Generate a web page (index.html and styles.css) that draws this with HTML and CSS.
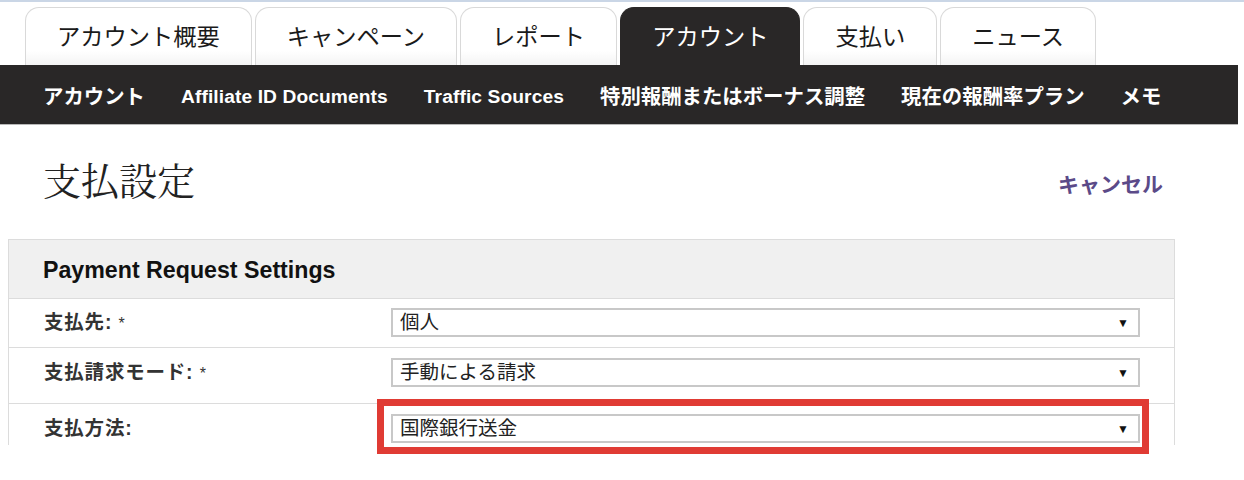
FILE: index.html
```html
<!DOCTYPE html>
<html lang="ja">
<head>
    <meta charset="UTF-8">
    <meta name="viewport" content="width=device-width, initial-scale=1.0">
    <title>支払設定</title>
    <link rel="stylesheet" href="styles.css">
</head>
<body>

<div class="topline"></div>

<nav class="tabs">
    <a class="tab" href="#">アカウント概要</a>
    <a class="tab" href="#">キャンペーン</a>
    <a class="tab" href="#">レポート</a>
    <a class="tab active" href="#">アカウント</a>
    <a class="tab" href="#">支払い</a>
    <a class="tab" href="#">ニュース</a>
</nav>

<nav class="subnav">
    <a class="ja" href="#">アカウント</a>
    <a href="#">Affiliate ID Documents</a>
    <a href="#">Traffic Sources</a>
    <a class="ja" href="#">特別報酬またはボーナス調整</a>
    <a class="ja" href="#">現在の報酬率プラン</a>
    <a class="ja" href="#">メモ</a>
</nav>

<div class="title-row">
    <h1>支払設定</h1>
    <a class="cancel" href="#">キャンセル</a>
</div>

<div class="panel">
    <div class="panel-header">Payment Request Settings</div>

    <div class="row row-1">
        <label class="field-label">支払先: <span class="req">*</span></label>
        <div class="select">
            <span>個人</span>
            <span class="arrow">▼</span>
        </div>
    </div>

    <div class="row row-2">
        <label class="field-label">支払請求モード: <span class="req">*</span></label>
        <div class="select">
            <span>手動による請求</span>
            <span class="arrow">▼</span>
        </div>
    </div>

    <div class="row row-3">
        <label class="field-label">支払方法:</label>
        <div class="select">
            <span>国際銀行送金</span>
            <span class="arrow">▼</span>
        </div>
        <div class="highlight"></div>
    </div>
</div>

</body>
</html>
```

FILE: styles.css
```css
html, body {
    min-height: 480px;
}
body {
    margin: 0;
    background-color: #ffffff;
    color: #222;
    font-family: 'Liberation Sans', 'Noto Sans CJK JP', sans-serif;
}
a {
    text-decoration: none;
}
.topline {
    height: 2px;
    background-color: #cad6e6;
}
.tabs {
    display: flex;
    gap: 3px;
    padding-left: 25px;
    margin-top: 5px;
}
.tab {
    height: 58px;
    box-sizing: border-box;
    padding: 3px 31px 0;
    display: flex;
    align-items: center;
    font-size: 23.25px;
    line-height: 1;
    color: #1a1a1a;
    background: linear-gradient(#ffffff 75%, #f4f4f4);
    border: 1px solid #d9d9d9;
    border-bottom: none;
    border-radius: 14px 14px 0 0;
}
.tab.active {
    background: #292727;
    border-color: #292727;
    color: #ffffff;
}
.subnav {
    width: 1238px;
    height: 60px;
    box-sizing: border-box;
    background-color: #292727;
    border-bottom: 1px solid #b8b8b8;
    display: flex;
    align-items: center;
    gap: 36px;
    padding: 5px 0 0 43px;
}
.subnav a {
    color: #ffffff;
    font-weight: bold;
    font-size: 19.2px;
    line-height: 1;
    letter-spacing: 0.1px;
}
.subnav a.ja {
    font-size: 20.4px;
    letter-spacing: 0;
}
.title-row {
    height: 114px;
    display: flex;
    justify-content: space-between;
    align-items: center;
    padding: 0 81px 0 43px;
}
.title-row h1 {
    margin: 0;
    font-family: 'Liberation Serif', 'Noto Serif CJK JP', 'Noto Sans CJK JP', serif;
    font-weight: normal;
    font-size: 38px;
    line-height: 1;
    color: #222;
}
.cancel {
    color: #5b4a88;
    font-weight: bold;
    font-size: 21px;
    line-height: 1;
    margin-top: 4px;
}
.panel {
    margin: 0 69px 0 8px;
    border: 1px solid #dcdcdc;
    border-bottom: none;
}
.panel-header {
    height: 59px;
    box-sizing: border-box;
    background-color: #f0f0f0;
    border-bottom: 1px solid #dcdcdc;
    display: flex;
    align-items: center;
    padding: 2px 0 0 34px;
    font-weight: bold;
    font-size: 23.2px;
    color: #111;
}
.row {
    display: grid;
    grid-template-columns: 382px 1fr;
    align-items: center;
    padding-right: 34px;
    border-bottom: 1px solid #dcdcdc;
    position: relative;
}
.row-1 {
    padding-top: 9px;
    padding-bottom: 10px;
}
.row-2 {
    padding-top: 10px;
    padding-bottom: 16px;
}
.row-3 {
    padding-top: 10px;
    padding-bottom: 2px;
    border-bottom: none;
}
.field-label {
    padding-left: 35px;
    font-weight: bold;
    font-size: 19.5px;
    line-height: 1;
    letter-spacing: 0.8px;
    color: #333;
}
.field-label .req {
    font-weight: normal;
    font-size: 16px;
}
.select {
    height: 29px;
    box-sizing: border-box;
    border: 2px solid #c8c8c8;
    display: flex;
    align-items: center;
    justify-content: space-between;
    padding: 0 9px 0 7px;
    font-size: 19.5px;
    line-height: 1;
    color: #222;
    background-color: #fff;
}
.select .arrow {
    font-size: 12px;
    color: #111;
}
.highlight {
    position: absolute;
    top: -5px;
    left: 368px;
    width: 772px;
    height: 55px;
    box-sizing: border-box;
    border: 7px solid #e03b34;
}
```
